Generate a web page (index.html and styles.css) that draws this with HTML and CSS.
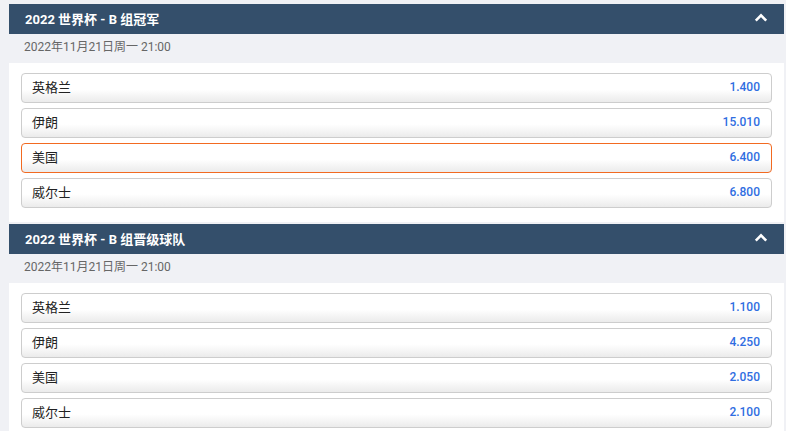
FILE: index.html
```html
<!DOCTYPE html>
<html lang="zh-CN">
<head>
    <meta charset="UTF-8">
    <meta name="viewport" content="width=device-width, initial-scale=1.0">
    <title>2022 世界杯 - B 组</title>
    <link rel="stylesheet" href="styles.css">
</head>
<body>
    <div class="market">
        <div class="market-head">
            <span class="market-title">2022 世界杯 - B 组冠军</span>
            <svg class="toggle" width="14" height="9" viewBox="0 0 14 9"><path d="M1.8 7.6 7 2.4l5.2 5.2" fill="none" stroke="#fff" stroke-width="2.6"/></svg>
        </div>
        <div class="market-date">2022年11月21日周一 21:00</div>
        <div class="outcomes">
            <div class="outcome"><span class="name">英格兰</span><span class="odds">1.400</span></div>
            <div class="outcome"><span class="name">伊朗</span><span class="odds">15.010</span></div>
            <div class="outcome selected"><span class="name">美国</span><span class="odds">6.400</span></div>
            <div class="outcome"><span class="name">威尔士</span><span class="odds">6.800</span></div>
        </div>
    </div>

    <div class="market">
        <div class="market-head">
            <span class="market-title">2022 世界杯 - B 组晋级球队</span>
            <svg class="toggle" width="14" height="9" viewBox="0 0 14 9"><path d="M1.8 7.6 7 2.4l5.2 5.2" fill="none" stroke="#fff" stroke-width="2.6"/></svg>
        </div>
        <div class="market-date">2022年11月21日周一 21:00</div>
        <div class="outcomes">
            <div class="outcome"><span class="name">英格兰</span><span class="odds">1.100</span></div>
            <div class="outcome"><span class="name">伊朗</span><span class="odds">4.250</span></div>
            <div class="outcome"><span class="name">美国</span><span class="odds">2.050</span></div>
            <div class="outcome"><span class="name">威尔士</span><span class="odds">2.100</span></div>
        </div>
    </div>
</body>
</html>
```

FILE: styles.css
```css
* {
    margin: 0;
    padding: 0;
    box-sizing: border-box;
}

body {
    font-family: Roboto, "Noto Sans CJK SC", sans-serif;
    font-size: 13px;
    background: #f0f1f5;
    color: #222;
    padding: 4px 2px 0 9px;
}

.market {
    margin-bottom: 2px;
}

.market-head {
    height: 30px;
    background: #344f6b;
    color: #fff;
    display: flex;
    align-items: center;
    justify-content: space-between;
    padding: 0 16px 2px 16px;
}

.market-title {
    font-weight: 700;
    font-size: 13px;
}

.toggle {
    display: block;
    margin-top: -1px;
}

.market-date {
    height: 29px;
    line-height: 27px;
    padding-left: 15px;
    color: #666;
    font-size: 12px;
}

.outcomes {
    background: #fff;
    padding: 10px 12px 14px;
    display: flex;
    flex-direction: column;
    gap: 5px;
}

.outcome {
    height: 30px;
    display: flex;
    align-items: center;
    justify-content: space-between;
    padding: 0 11px 3px 10px;
    border: 1px solid #cdcdcd;
    border-radius: 4px;
    background: linear-gradient(180deg, #fff 0%, #fff 55%, #ebebeb 100%);
}

.outcome.selected {
    border-color: #f26a21;
}

.name {
    color: #222;
}

.odds {
    color: #2f6de1;
    font-size: 12px;
    font-weight: 500;
}
```
